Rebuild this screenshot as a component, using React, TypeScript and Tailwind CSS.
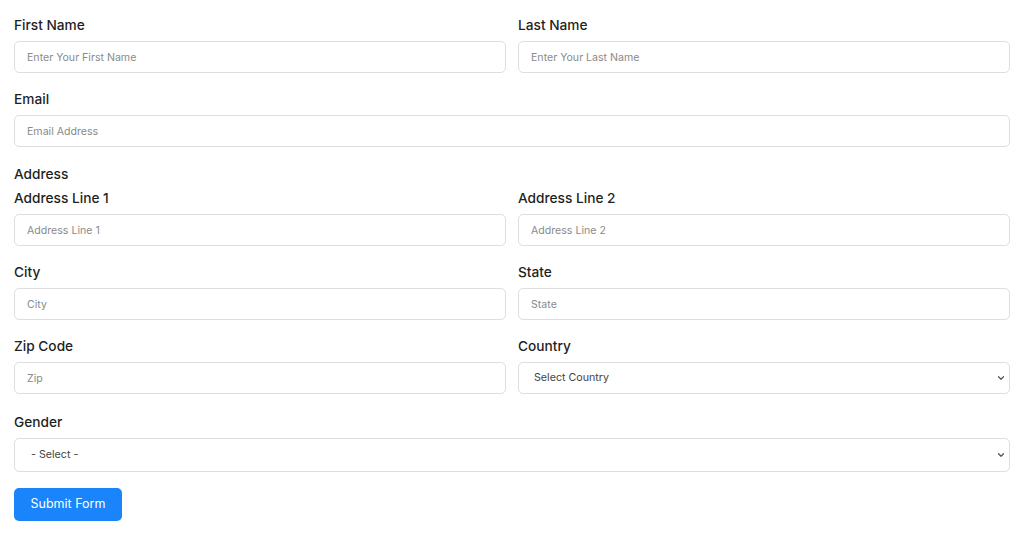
import { ChevronDown } from 'lucide-react';

const labelClass = 'block text-[13.7px] font-medium leading-5 text-[#1f1f1f] mb-[6px]';
const inputClass =
  'block w-full h-[32px] rounded-[5px] border border-[#dedede] bg-white px-[12px] text-[10.6px] text-[#333] placeholder:text-[#8a8a8a] outline-none';

function Field({ label, placeholder }: { label: string; placeholder: string }) {
  return (
    <div>
      <label className={labelClass}>{label}</label>
      <input className={inputClass} placeholder={placeholder} />
    </div>
  );
}

function SelectField({
  label,
  options,
  tall,
}: {
  label: string;
  options: string[];
  tall?: boolean;
}) {
  return (
    <div>
      <label className={labelClass}>{label}</label>
      <div className="relative">
        <select
          className={`block w-full appearance-none rounded-[5px] border border-[#dedede] bg-white text-[10.7px] text-[#444] outline-none ${
            tall ? 'h-[34px] pl-[16px]' : 'h-[32px] pl-[15px]'
          }`}
        >
          {options.map((o) => (
            <option key={o}>{o}</option>
          ))}
        </select>
        <ChevronDown
          className="pointer-events-none absolute right-[4px] top-1/2 h-[10px] w-[10px] -translate-y-1/2 text-[#555]"
          strokeWidth={3}
        />
      </div>
    </div>
  );
}

export default function App() {
  return (
    <div
      className="min-h-[551px] bg-white px-[14px] pt-[15px]"
      style={{ fontFamily: 'Inter, "Noto Sans", sans-serif' }}
    >
      <form onSubmit={(e) => e.preventDefault()}>
        <div className="grid grid-cols-2 gap-x-[12px]">
          <Field label="First Name" placeholder="Enter Your First Name" />
          <Field label="Last Name" placeholder="Enter Your Last Name" />
        </div>

        <div className="mt-[16px]">
          <Field label="Email" placeholder="Email Address" />
        </div>

        <h3 className="mt-[17px] mb-[4px] text-[13.7px] font-medium leading-5 text-[#1f1f1f]">
          Address
        </h3>
        <div className="grid grid-cols-2 gap-x-[12px] gap-y-[16px]">
          <Field label="Address Line 1" placeholder="Address Line 1" />
          <Field label="Address Line 2" placeholder="Address Line 2" />
          <Field label="City" placeholder="City" />
          <Field label="State" placeholder="State" />
          <Field label="Zip Code" placeholder="Zip" />
          <SelectField label="Country" options={['Select Country', 'United States', 'Canada']} />
        </div>

        <div className="mt-[18px]">
          <SelectField label="Gender" options={['- Select -', 'Male', 'Female', 'Other']} tall />
        </div>

        <button
          type="submit"
          className="mt-[16px] h-[33px] w-[108px] rounded-[5px] bg-[#1a84fb] text-[12.5px] text-white"
        >
          Submit Form
        </button>
      </form>
    </div>
  );
}
